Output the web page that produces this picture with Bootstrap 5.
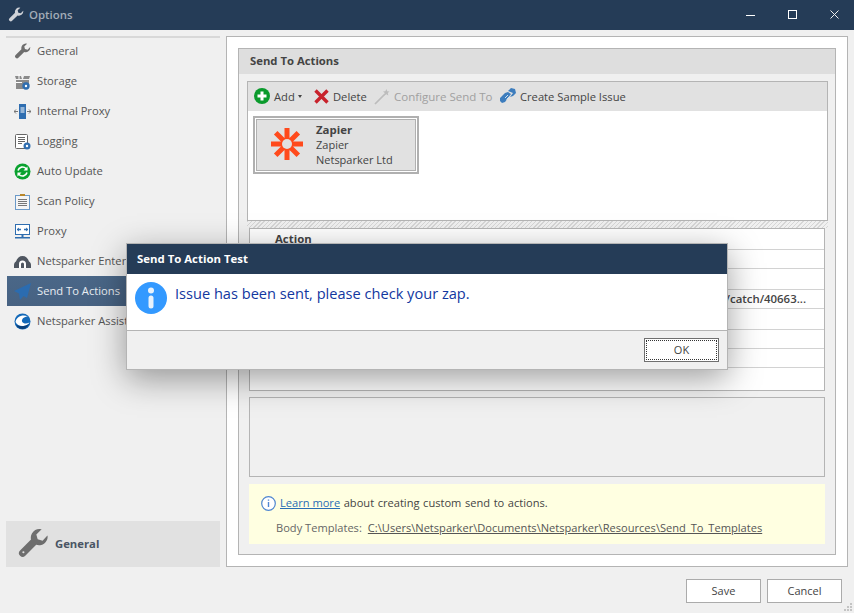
<!DOCTYPE html>
<html lang="en"><head><meta charset="utf-8"><title>Options</title>
<link href="https://cdn.jsdelivr.net/npm/bootstrap@5.3.0/dist/css/bootstrap.min.css" rel="stylesheet">
<style>
html,body{height:100%;overflow:hidden}
body{background:#f0f0f0;font-family:"Open Sans","Liberation Sans",sans-serif;font-size:11px;color:#444;position:relative;width:854px;height:613px}
svg{display:block;flex:none}
.titlebar{height:30px;background:#253c57;color:#a3acb7;font-weight:600;font-size:11.4px;overflow:hidden}
.titlebar .ttl{margin-left:5px}
.wins{margin-right:-2px}
.winb{width:42px;height:30px}
.bodyrow{height:537px;padding-top:6px}
.side{width:226px;padding-left:6px}
.sidetop{width:214px;border-top:2px solid #d8d8d8;margin-bottom:-2px}
.sideitem{height:30px;width:214px;padding-left:8px;gap:6px;color:#555;white-space:nowrap;font-size:11.2px}
.sideitem svg{width:17px;height:17px}
.sideitem.sel{background:linear-gradient(#4a6788,#476282);color:#e8edf2;margin-left:1px;padding-left:7px}
.sideblock{width:214px;height:46px;background:#e1e1e1;padding-left:11px;gap:6px;font-weight:700;color:#4a5564;font-size:11.3px}
.outer{width:622px;border:1px solid #b4b4b4;background:#fff;padding:11px}
.inner{border:1px solid #b4b4b4;background:#f0f0f0;height:100%}
.inhead{height:25px;background:#dedede;padding-left:11px;font-weight:700;color:#444;font-size:11.3px}
.inbody{padding:7px 7px 0 8px}
.actions{height:140px;border:1px solid #b4b4b4;background:#fff}
.tb{height:29px;background:#e1e1e1;padding-left:6px;white-space:nowrap;font-size:11.2px}
.tbi{gap:4px}
.tbi span.lbl{padding-top:1px}
.tbi.add{width:60px}
.tbi.del{width:60px}
.tbi.cfg{width:126px;font-size:11.5px}
.tbi.off{color:#a0a0a0}
.caret{width:0;height:0;border-left:2.5px solid transparent;border-right:2.5px solid transparent;border-top:3px solid #444;margin-left:-1px}
.tile{margin:5px 0 0 5px;width:166px;height:58px;border:2px solid #b0b0b0;padding:1px;background:#fff}
.tilein{background:#e1e1e1;border:1px solid #b0b0b0;height:100%;padding:0 0 2px 14px;gap:13px;line-height:15px}
.tilein .fw-bold{font-size:11.4px}
.split{height:7px;background:repeating-linear-gradient(135deg,#d6d6d6 0 1px,#f0f0f0 1px 3px)}
.grid{margin:0 3px 0 2px;height:163px;border:1px solid #b4b4b4;background:#fff}
.grid .table{--bs-table-bg:transparent;font-size:11.4px;margin:0;color:#444}
.grid td,.grid th{padding:0 18px;border-bottom:1px solid #d2d2d2;font-weight:600;line-height:1}
.grid th{padding-left:25px;text-align:left;height:20px;vertical-align:middle;font-weight:700;font-size:11.4px}
.grid td{vertical-align:middle}
.grid tbody tr:nth-child(odd) td{height:19px}
.grid tbody tr:nth-child(even) td{height:21px}
.grid tbody tr:last-child td{height:19px}
.detail{margin:6px 3px 0 2px;height:80px;border:1px solid #b4b4b4;background:#f0f0f0}
.hint{margin:7px 3px 0 2px;height:60px;background:#ffffe1;padding:11px 0 0 12px;font-size:11.1px}
.hint a{color:#2a6db5}
.hint a.plain{color:#555}
.hintmore{word-spacing:.7px}
.hintmore a{word-spacing:0}
.hl2{margin:8px 0 0 15px;gap:6px;color:#666;white-space:nowrap}
.foot{padding:12px 12px 0 0;gap:6px}
.wbtn{width:75px;height:24px;border:1px solid #ababab;background:#fff;color:#444;font-size:11px;padding:0;border-radius:0}
.dlg{position:absolute;left:126px;top:243px;width:602px;height:127px;border:1px solid #b4b4b4;background:#f0f0f0;box-shadow:0 9px 32px rgba(0,0,0,.38)}
.dlghead{height:30px;background:#253c57;color:#fff;font-weight:700;padding-left:10px;font-size:11.4px}
.dlgbody{height:57px;background:#fff;border-bottom:1px solid #b4b4b4;padding:8px 0 0 8px;gap:8px;font-size:14.6px;color:#12379f;line-height:1}
.dlgbody span{margin-top:4px}
.dlgfoot{height:38px;padding:7px 8px 0 0}
.okbtn{width:75px;height:24px;border:1px solid #6f6f6f;background:#fff;padding:1px;border-radius:0;font-size:11px;color:#444}
.okbtn span{display:block;height:100%;border:1px dotted #333;line-height:18px}
.grip{position:absolute;right:1px;bottom:1px}
</style></head><body>
<div class="titlebar d-flex align-items-center">
  <svg class="ms-2" width="16" height="16" viewBox="0 0 24 24"><path fill="#d0d3d8" d="M23 6.500a6.500 6.500 0 0 1-8.600 6.100L6.200 20.800a2.700 2.700 0 0 1-3.900-3.900l8.200-8.200A6.500 6.500 0 0 1 18.500 1L14.500 4.800l1 3.700 3.700 1 3.600-3.800z"/></svg>
  <span class="ttl flex-grow-1">Options</span>
  <div class="wins d-flex">
    <div class="winb d-flex align-items-center justify-content-center"><svg width="10" height="10" viewBox="0 0 10 10"><path d="M0 5.500h9" stroke="#fff"/></svg></div>
    <div class="winb d-flex align-items-center justify-content-center"><svg width="10" height="10" viewBox="0 0 10 10"><rect x=".5" y=".5" width="8" height="8" fill="none" stroke="#fff"/></svg></div>
    <div class="winb d-flex align-items-center justify-content-center"><svg width="10" height="10" viewBox="0 0 10 10"><path d="M.5.500l8 8m0-8l-8 8" stroke="#eee"/></svg></div>
  </div>
</div>
<div class="bodyrow d-flex">
  <div class="side d-flex flex-column">
    <div class="sidetop"></div>
    <div class="sideitem d-flex align-items-center"><svg viewBox="0 0 24 24"><path fill="#6e6e6e" d="M23 6.500a6.500 6.500 0 0 1-8.600 6.100L6.200 20.800a2.700 2.700 0 0 1-3.900-3.900l8.200-8.200A6.500 6.500 0 0 1 18.500 1L14.500 4.800l1 3.700 3.700 1 3.600-3.800z"/></svg>General</div>
    <div class="sideitem d-flex align-items-center"><svg viewBox="0 0 17 17"><path fill="#8a8a8a" d="M1 3h6l1 3H2zM9 6l1-3h6l-1 3zM2 7h13v4H9v5H2z"/><path stroke="#fff" d="M2 9.500h6M5 1v5"/><circle cx="12" cy="13" r="3.700" fill="#2f6eb0"/><circle cx="12" cy="13" r="1.200" fill="#fff"/></svg>Storage</div>
    <div class="sideitem d-flex align-items-center"><svg viewBox="0 0 17 17"><rect x="5" y="1" width="7" height="15" fill="#2f6eb0"/><path stroke="#fff" d="M6.500 5h4M6.500 7h4M6.500 9h4"/><path fill="none" stroke="#777" d="M4 8.500H0m2-2l-2 2 2 2M13 8.500h4m-2-2l2 2-2 2"/></svg>Internal Proxy</div>
    <div class="sideitem d-flex align-items-center"><svg viewBox="0 0 17 17"><rect x="1.500" y="1.500" width="12" height="14" rx="1" fill="#fff" stroke="#666"/><path stroke="#666" d="M4 4.500h7M4 6.500h7M4 8.500h7M4 10.500h4"/><circle cx="13" cy="13" r="3.500" fill="#2f6eb0"/><circle cx="13" cy="13" r="1.200" fill="#fff"/></svg>Logging</div>
    <div class="sideitem d-flex align-items-center"><svg viewBox="0 0 17 17"><circle cx="8.500" cy="8.500" r="8" fill="#0aa22f"/><path fill="none" stroke="#fff" stroke-width="1.600" d="M4 7.500a4.700 4.700 0 0 1 8-2l1 1M13 9.500a4.700 4.700 0 0 1-8 2l-1-1"/><path fill="#fff" d="M13.500 3.500v4h-4zM3.500 13.500v-4h4z"/></svg>Auto Update</div>
    <div class="sideitem d-flex align-items-center"><svg viewBox="0 0 17 17"><rect x="1.500" y="2.500" width="14" height="14" fill="#f5f5f5" stroke="#6b9ac9"/><rect x="6" y="1" width="5" height="2" fill="#b8862b"/><path stroke="#777" d="M4 6.500h9M4 8.500h9M4 10.500h9M4 12.500h9"/></svg>Scan Policy</div>
    <div class="sideitem d-flex align-items-center"><svg viewBox="0 0 17 17"><rect x="1.500" y="1.500" width="14" height="10" fill="#fff" stroke="#2f6eb0"/><path stroke="#2f6eb0" stroke-width="1.300" d="M3 6.500h4M10 6.500h4"/><path fill="#2f6eb0" d="M3 6.500l2-2v4zM14 6.500l-2-2v4zM7.500 12h2v2h-2zM1 14h15v1.500H1z"/></svg>Proxy</div>
    <div class="sideitem d-flex align-items-center"><svg viewBox="0 0 17 17"><path fill="#4f5660" d="M0 15v-3c0-2 1-3 2-3.500C3 5 5.500 3 8.500 3s5.500 2 6.500 5.500c1 .5 2 1.500 2 3.500v3z"/><path fill="#fff" d="M5 15v-4a3.500 3.500 0 0 1 7 0v4h-2v-4a1.500 1.500 0 0 0-3 0v4z"/></svg>Netsparker Enterprise</div>
    <div class="sideitem sel d-flex align-items-center"><svg viewBox="0 0 17 17"><path fill="#2b6cb0" d="M17 0L0 8l5 2.500L6 17l3.500-4 3.500 2z"/></svg>Send To Actions</div>
    <div class="sideitem d-flex align-items-center"><svg viewBox="0 0 17 17"><circle cx="8.500" cy="8.500" r="8" fill="#1268b8"/><path fill="#fff" d="M1.500 9C2.500 4 8 1 14 3.500 10 3.500 7.500 6 8 8.500c1.500 2.500 4.500 2.500 7.500 1-1 2-3 3-6 3.500-3.500.5-6.500-1-8-4z"/><path fill="#0b3f78" d="M2 11.500c3 2 8 2.500 13-.5-1.500 3.500-4 5-6.500 5S3.500 15 2 11.500z"/></svg>Netsparker Assistant</div>
    <div class="sideblock d-flex align-items-center mt-auto"><svg width="32" height="32" viewBox="0 0 24 24"><path fill="#6e6e6e" fill-rule="evenodd" d="M23 6.500a6.500 6.500 0 0 1-8.600 6.100L6.200 20.800a2.700 2.700 0 0 1-3.900-3.900l8.200-8.200A6.500 6.500 0 0 1 18.500 1L14.500 4.800l1 3.700 3.700 1 3.600-3.800zM4 18.200a.8.800 0 1 0 1.600 0 .8.800 0 0 0-1.600 0z"/></svg>General</div>
  </div>
  <div class="outer">
    <div class="inner d-flex flex-column">
      <div class="inhead d-flex align-items-center">Send To Actions</div>
      <div class="inbody">
        <div class="actions">
          <div class="tb d-flex align-items-center">
            <div class="tbi add d-flex align-items-center"><svg width="16" height="16" viewBox="0 0 16 16"><circle cx="8" cy="8" r="8" fill="#0a9a2c"/><path stroke="#fff" stroke-width="3" d="M8 3.500v9M3.500 8h9"/></svg><span class="lbl">Add</span><span class="caret"></span></div>
            <div class="tbi del d-flex align-items-center"><svg width="15" height="15" viewBox="0 0 15 15"><path stroke="#c8232c" stroke-width="3.400" d="M1.500 1.500l12 12m0-12l-12 12"/></svg><span class="lbl">Delete</span></div>
            <div class="tbi cfg off d-flex align-items-center"><svg width="16" height="16" viewBox="0 0 16 16"><path stroke="#bcbcbc" stroke-width="1.700" d="M1 15L11 5"/><path fill="#bcbcbc" d="M12.500 0l.7 2.300 2.300.2-1.700 1.600.5 2.400-2-1.300-2 1.300.5-2.400L9 2.500l2.300-.2z"/></svg><span class="lbl">Configure Send To</span></div>
            <div class="tbi d-flex align-items-center"><svg width="16" height="16" viewBox="0 0 16 16"><path fill="#3d7dbd" d="M0 10l5-5 3-1 3 2-6 8-3 1-2-2zM8 3l3-3 4 1 1 4-3 3-3 1 3-4z"/><path stroke="#cfe0f0" d="M5 10l3-3M6.500 11.500l3-3"/></svg><span class="lbl">Create Sample Issue</span></div>
          </div>
          <div class="tile">
            <div class="tilein d-flex align-items-center">
              <svg width="32" height="32" viewBox="0 0 32 32"><path stroke="#ff4a1c" stroke-width="5" d="M16 0v32M0 16h32M4.700 4.700l22.600 22.600M27.300 4.700L4.700 27.300"/><circle cx="16" cy="16" r="5" fill="#e1e1e1"/></svg>
              <div><div class="fw-bold">Zapier</div><div>Zapier</div><div>Netsparker Ltd</div></div>
            </div>
          </div>
        </div>
        <div class="split"></div>
        <div class="grid">
          <table class="table table-borderless">
            <thead><tr><th>Action</th></tr></thead>
            <tbody>
              <tr><td></td></tr><tr><td></td></tr>
              <tr><td class="text-end">https://hooks.zapier.com/hooks/catch/40663...</td></tr>
              <tr><td></td></tr><tr><td></td></tr><tr><td></td></tr>
            </tbody>
          </table>
        </div>
        <div class="detail"></div>
        <div class="hint">
          <div class="d-flex align-items-center gap-1"><svg width="15" height="15" viewBox="0 0 15 15"><circle cx="7.500" cy="7.500" r="6.800" fill="#fff" stroke="#4f86d0" stroke-width="1.200"/><path stroke="#4f86d0" stroke-width="1.400" d="M7.500 6v5M7.500 3.500v1.300"/></svg><span class="hintmore"><a href="#">Learn more</a> about creating custom send to actions.</span></div>
          <div class="hl2 d-flex"><span>Body Templates:</span><a class="plain" href="#">C:\Users\Netsparker\Documents\Netsparker\Resources\Send_To_Templates</a></div>
        </div>
      </div>
    </div>
  </div>
</div>
<div class="foot d-flex justify-content-end">
  <button class="btn wbtn" type="button">Save</button>
  <button class="btn wbtn" type="button">Cancel</button>
</div>
<svg class="grip" width="9" height="9" viewBox="0 0 9 9"><path fill="#c4c4c4" d="M6 0h2v2H6zM3 3h2v2H3zM6 3h2v2H6zM0 6h2v2H0zM3 6h2v2H3zM6 6h2v2H6z"/></svg>
<div class="dlg">
  <div class="dlghead d-flex align-items-center">Send To Action Test</div>
  <div class="dlgbody d-flex"><svg width="32" height="32" viewBox="0 0 32 32"><circle cx="16" cy="16" r="16" fill="#3399ff"/><circle cx="16" cy="8.500" r="3" fill="#e8f2fc"/><rect x="13.500" y="13.500" width="5" height="13" rx="2.500" fill="#e8f2fc"/></svg><span>Issue has been sent, please check your zap.</span></div>
  <div class="dlgfoot d-flex justify-content-end"><button class="btn okbtn" type="button"><span>OK</span></button></div>
</div>
</body></html>
